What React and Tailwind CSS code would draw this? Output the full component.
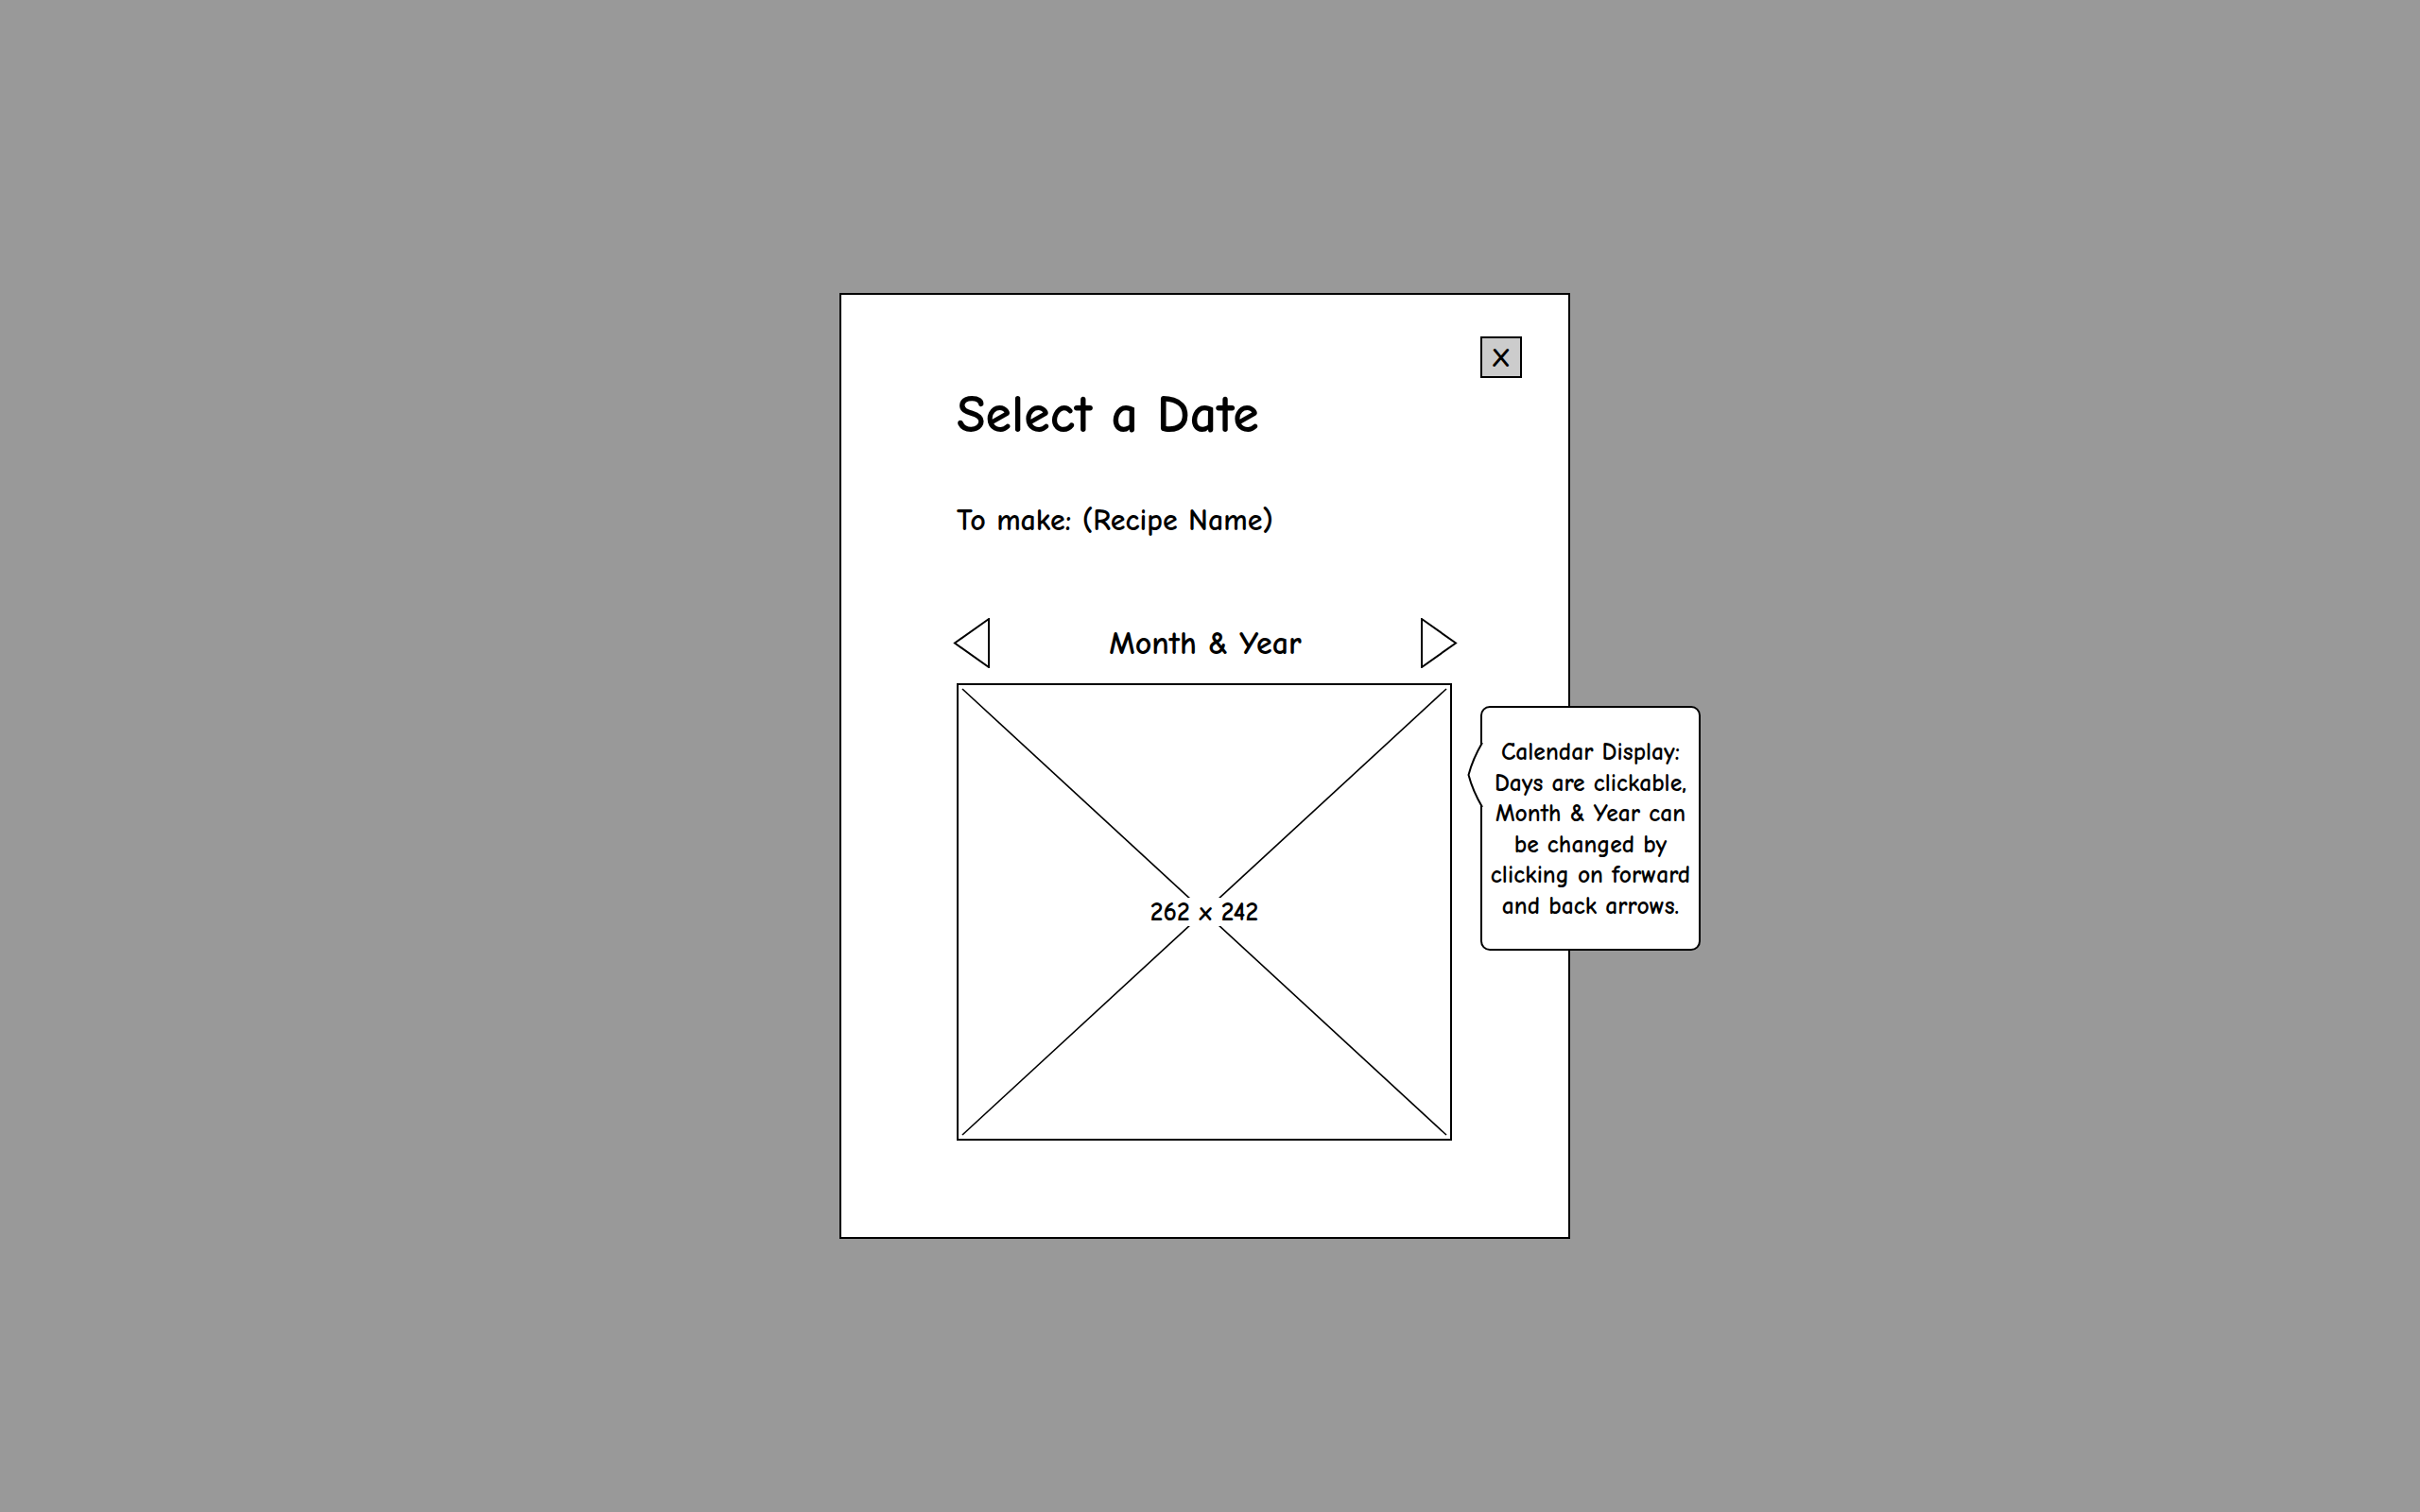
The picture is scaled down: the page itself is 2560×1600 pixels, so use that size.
import React from "react";

const font = {
  fontFamily: '"Comic Sans MS", "Comic Neue", "Liberation Sans", Arial, sans-serif',
};

function ArrowLeft() {
  return (
    <svg width="40" height="53" viewBox="0 0 40 53" className="block">
      <path d="M38 1 L2 26.5 L38 52 Z" fill="none" stroke="#000" strokeWidth="2" strokeLinejoin="miter" />
    </svg>
  );
}

function ArrowRight() {
  return (
    <svg width="40" height="53" viewBox="0 0 40 53" className="block">
      <path d="M2 1 L38 26.5 L2 52 Z" fill="none" stroke="#000" strokeWidth="2" strokeLinejoin="miter" />
    </svg>
  );
}

function Placeholder({ w, h }) {
  return (
    <div className="relative w-[524px] h-[484px] border-2 border-black bg-white">
      <svg className="absolute inset-0" width="520" height="480" viewBox="0 0 520 480">
        <line x1="4" y1="4" x2="516" y2="476" stroke="#000" strokeWidth="1.6" />
        <line x1="516" y1="4" x2="4" y2="476" stroke="#000" strokeWidth="1.6" />
      </svg>
      <div className="absolute inset-0 flex items-center justify-center">
        <span className="bg-white px-[3px] text-[27.5px] font-bold leading-[30px] text-black">
          {w} x {h}
        </span>
      </div>
    </div>
  );
}

function Callout() {
  return (
    <div className="absolute left-[676px] top-[435px] w-[233px] h-[259px] rounded-[10px] border-2 border-black bg-white pt-[31px]">
      <svg className="absolute left-[-16px] top-[37px]" width="20" height="68" viewBox="0 0 20 68">
        <path d="M16 0 L1.5 34 L16 68 L20 68 L20 0 Z" fill="#fff" />
        <path d="M16 0 Q6 17 1.5 34 Q6 51 16 68" fill="none" stroke="#000" strokeWidth="2" />
      </svg>
      <p className="text-center text-[25.6px] font-bold leading-[32.5px] text-black">
        Calendar Display:
        <br />
        Days are clickable,
        <br />
        Month &amp; Year can
        <br />
        be changed by
        <br />
        clicking on forward
        <br />
        and back arrows.
      </p>
    </div>
  );
}

export default function App() {
  return (
    <div className="min-h-screen bg-[#999999] pt-[310px] pl-[888px]" style={font}>
      <div className="relative w-[773px] h-[1001px] border-2 border-black bg-white pl-[122px] pt-[44px]">
        <div className="flex justify-end mr-[49px]">
          <button className="w-[44px] h-[44px] border-2 border-black bg-[#cccccc] flex items-center justify-center text-[29px] font-bold leading-none text-black">
            X
          </button>
        </div>

        <h1 className="mt-[11px] text-[56px] font-bold leading-none text-black">Select a Date</h1>

        <p className="mt-[68px] text-[32px] font-bold leading-none text-black">To make: (Recipe Name)</p>

        <div className="mt-[87px] -ml-[4px] w-[534px] h-[53px] flex items-center justify-between">
          <ArrowLeft />
          <span className="text-[34px] font-bold leading-none text-black">Month &amp; Year</span>
          <ArrowRight />
        </div>

        <div className="mt-[16px]">
          <Placeholder w={262} h={242} />
        </div>

        <Callout />
      </div>
    </div>
  );
}
